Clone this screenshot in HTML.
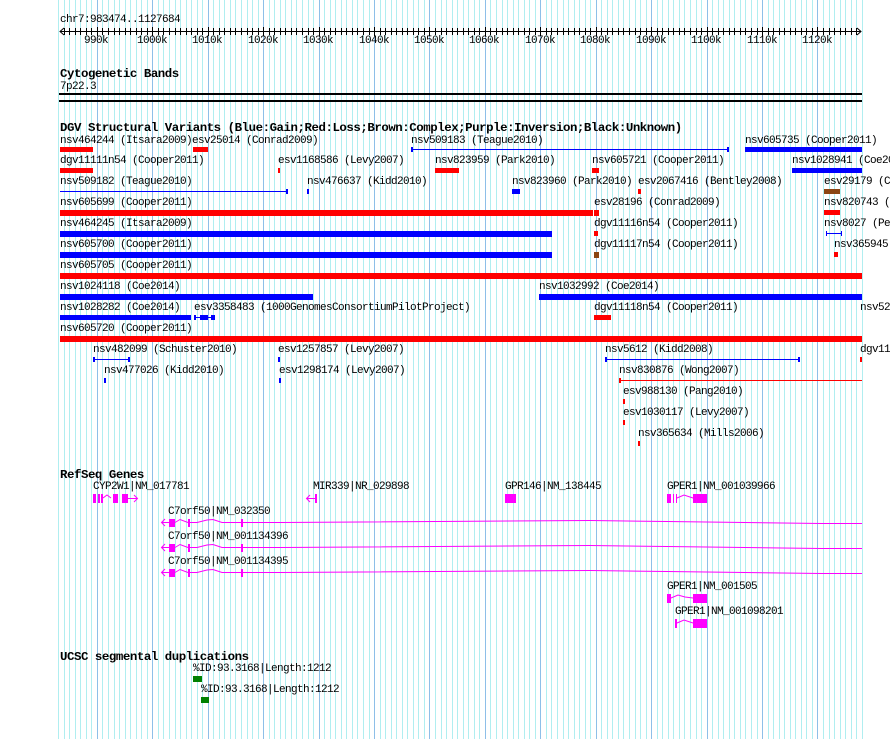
<!DOCTYPE html>
<html><head><meta charset="utf-8"><style>
html,body{margin:0;padding:0;width:890px;height:739px;overflow:hidden;background:#fff}
#wrap{position:relative;width:890px;height:739px;overflow:hidden}
.t{position:absolute;font-family:"Liberation Mono",monospace;font-size:11px;letter-spacing:-0.6px;line-height:10px;white-space:nowrap;color:#000}
.h{position:absolute;font-family:"Liberation Mono",monospace;font-size:12.4px;letter-spacing:-0.45px;font-weight:bold;line-height:12px;white-space:nowrap;color:#000}
svg{position:absolute;left:0;top:0}
</style></head><body><div id="wrap">
<svg id="g" width="890" height="739" shape-rendering="crispEdges"></svg>
<svg width="890" height="739" shape-rendering="crispEdges">
<line x1="60" y1="31.5" x2="861" y2="31.5" stroke="#000"/>
<path d="M64 28 L60 31.5 L64 35 M857 28 L861 31.5 L857 35" stroke="#000" fill="none" shape-rendering="auto"/>
<g id="tk" fill="#000"></g>
<rect x="59" y="93" width="803" height="2" fill="#000"/>
<rect x="59" y="100" width="803" height="2" fill="#000"/>
<g>
<rect x="60" y="147" width="33" height="5" fill="#f00"/>
<rect x="193" y="147" width="15" height="5" fill="#f00"/>
<rect x="411" y="149" width="317" height="1" fill="#00f"/><rect x="411" y="147" width="2" height="5" fill="#00f"/><rect x="727" y="147" width="2" height="5" fill="#00f"/>
<rect x="745" y="147" width="117" height="5" fill="#00f"/>
<rect x="60" y="168" width="33" height="5" fill="#f00"/>
<rect x="278" y="168" width="2" height="5" fill="#f00"/>
<rect x="435" y="168" width="24" height="5" fill="#f00"/>
<rect x="592" y="168" width="7" height="5" fill="#f00"/>
<rect x="792" y="168" width="70" height="5" fill="#00f"/>
<rect x="60" y="191" width="227" height="1" fill="#00f"/><rect x="286" y="189" width="2" height="5" fill="#00f"/>
<rect x="307" y="189" width="2" height="5" fill="#00f"/>
<rect x="512" y="189" width="8" height="5" fill="#00f"/>
<rect x="638" y="189" width="3" height="5" fill="#f00"/>
<rect x="824" y="189" width="16" height="5" fill="#8b4513"/>
<rect x="60" y="210" width="533" height="6" fill="#f00"/>
<rect x="594" y="210" width="5" height="6" fill="#f00"/>
<rect x="824" y="210" width="16" height="5" fill="#f00"/>
<rect x="60" y="231" width="492" height="6" fill="#00f"/>
<rect x="594" y="231" width="4" height="5" fill="#f00"/>
<rect x="826" y="233" width="16" height="1" fill="#00f"/><rect x="826" y="231" width="1" height="5" fill="#00f"/><rect x="841" y="231" width="1" height="5" fill="#00f"/>
<rect x="60" y="252" width="492" height="6" fill="#00f"/>
<rect x="594" y="252" width="5" height="6" fill="#8b4513"/>
<rect x="834" y="252" width="4" height="5" fill="#f00"/>
<rect x="60" y="273" width="802" height="6" fill="#f00"/>
<rect x="60" y="294" width="253" height="6" fill="#00f"/>
<rect x="539" y="294" width="323" height="6" fill="#00f"/>
<rect x="60" y="315" width="131" height="5" fill="#00f"/>
<rect x="194" y="317" width="21" height="1" fill="#00f"/><rect x="194" y="315" width="2" height="5" fill="#00f"/><rect x="200" y="315" width="8" height="5" fill="#00f"/><rect x="211" y="315" width="4" height="5" fill="#00f"/>
<rect x="594" y="315" width="17" height="5" fill="#f00"/>
<rect x="60" y="336" width="802" height="6" fill="#f00"/>
<rect x="93" y="359" width="36" height="1" fill="#00f"/><rect x="93" y="357" width="2" height="5" fill="#00f"/><rect x="128" y="357" width="2" height="5" fill="#00f"/>
<rect x="278" y="357" width="2" height="5" fill="#00f"/>
<rect x="605" y="359" width="194" height="1" fill="#00f"/><rect x="605" y="357" width="2" height="5" fill="#00f"/><rect x="798" y="357" width="2" height="5" fill="#00f"/>
<rect x="860" y="357" width="2" height="5" fill="#f00"/>
<rect x="104" y="378" width="2" height="5" fill="#00f"/>
<rect x="279" y="378" width="2" height="5" fill="#00f"/>
<rect x="619" y="380" width="243" height="1" fill="#f00"/><rect x="619" y="378" width="2" height="5" fill="#f00"/>
<rect x="623" y="399" width="2" height="5" fill="#f00"/>
<rect x="623" y="420" width="2" height="5" fill="#f00"/>
<rect x="638" y="441" width="2" height="5" fill="#f00"/>
</g>
<g fill="#f0f" stroke="none">
<rect x="93" y="494" width="3" height="9"/><rect x="98" y="494" width="2" height="9"/><rect x="101" y="494" width="2" height="9"/>
<rect x="113" y="494" width="5" height="9"/><rect x="122" y="494" width="6" height="9"/>
<rect x="128" y="498" width="9" height="1"/>
<rect x="307" y="498" width="9" height="1"/><rect x="315" y="494" width="2" height="9"/>
<rect x="505" y="494" width="11" height="9"/>
<rect x="667" y="494" width="4" height="9"/><rect x="673" y="494" width="1" height="9"/><rect x="676" y="494" width="1" height="9"/><rect x="693" y="494" width="14" height="9"/>
<rect x="667" y="594" width="4" height="9"/><rect x="693" y="594" width="14" height="9"/>
<rect x="675" y="619" width="2" height="9"/><rect x="693" y="619" width="14" height="9"/>
<rect x="169" y="519" width="6" height="8"/><rect x="188" y="519" width="2" height="8"/><rect x="241" y="519" width="2" height="8"/>
<rect x="169" y="544" width="6" height="8"/><rect x="188" y="544" width="2" height="8"/><rect x="241" y="544" width="2" height="8"/>
<rect x="169" y="569" width="6" height="8"/><rect x="188" y="569" width="2" height="8"/><rect x="241" y="569" width="2" height="8"/>
<rect x="193" y="676" width="9" height="6" fill="#008000"/>
<rect x="201" y="697" width="8" height="6" fill="#008000"/>
</g>
<g stroke="#f0f" fill="none" stroke-width="1" shape-rendering="auto">
<path d="M103 498 L107 495 L111 498"/>
<path d="M134 495 L137.5 498.5 L134 502"/>
<path d="M310 495 L306.5 498.5 L310 502"/>
<path d="M677 498 L684 495 L693 498"/>
<path d="M671 598 L678 595 L685 597 L693 598"/>
<path d="M677 623 L684 620 L693 623"/>
<g id="c7">
<path d="M162 522.5 L169 522.5 M165 519 L161.5 522.5 L165 526 M175 522.5 L180 519.5 L188 522.5 M190 522.5 L197 522.5 L207 520 L213 519.5 L222 522.5 L241 522.5 M243 522.5 L281 522.5 L590 520.5 L667 521.5 L745 522.5 L822 523.5 L862 523.5"/>
</g>
<use href="#c7" y="25"/>
<use href="#c7" y="50"/>
</g>
</svg>
<div class="t" style="left:60px;top:15px">chr7:983474..1127684</div>
<div class="t" style="left:84px;top:36px">990k</div>
<div class="t" style="left:137px;top:36px">1000k</div>
<div class="t" style="left:192px;top:36px">1010k</div>
<div class="t" style="left:248px;top:36px">1020k</div>
<div class="t" style="left:303px;top:36px">1030k</div>
<div class="t" style="left:359px;top:36px">1040k</div>
<div class="t" style="left:414px;top:36px">1050k</div>
<div class="t" style="left:469px;top:36px">1060k</div>
<div class="t" style="left:525px;top:36px">1070k</div>
<div class="t" style="left:580px;top:36px">1080k</div>
<div class="t" style="left:636px;top:36px">1090k</div>
<div class="t" style="left:691px;top:36px">1100k</div>
<div class="t" style="left:747px;top:36px">1110k</div>
<div class="t" style="left:802px;top:36px">1120k</div>
<div class="h" style="left:60px;top:68px">Cytogenetic Bands</div>
<div class="t" style="left:60px;top:82px">7p22.3</div>
<div class="h" style="left:60px;top:122px">DGV Structural Variants (Blue:Gain;Red:Loss;Brown:Complex;Purple:Inversion;Black:Unknown)</div>
<div class="t" style="left:60px;top:136px">nsv464244 (Itsara2009)</div>
<div class="t" style="left:192px;top:136px">esv25014 (Conrad2009)</div>
<div class="t" style="left:411px;top:136px">nsv509183 (Teague2010)</div>
<div class="t" style="left:745px;top:136px">nsv605735 (Cooper2011)</div>
<div class="t" style="left:60px;top:156px">dgv11111n54 (Cooper2011)</div>
<div class="t" style="left:278px;top:156px">esv1168586 (Levy2007)</div>
<div class="t" style="left:435px;top:156px">nsv823959 (Park2010)</div>
<div class="t" style="left:592px;top:156px">nsv605721 (Cooper2011)</div>
<div class="t" style="left:792px;top:156px">nsv1028941 (Coe2014)</div>
<div class="t" style="left:60px;top:177px">nsv509182 (Teague2010)</div>
<div class="t" style="left:307px;top:177px">nsv476637 (Kidd2010)</div>
<div class="t" style="left:512px;top:177px">nsv823960 (Park2010)</div>
<div class="t" style="left:638px;top:177px">esv2067416 (Bentley2008)</div>
<div class="t" style="left:824px;top:177px">esv29179 (Conrad2009)</div>
<div class="t" style="left:60px;top:198px">nsv605699 (Cooper2011)</div>
<div class="t" style="left:594px;top:198px">esv28196 (Conrad2009)</div>
<div class="t" style="left:824px;top:198px">nsv820743 (Coe2014)</div>
<div class="t" style="left:60px;top:219px">nsv464245 (Itsara2009)</div>
<div class="t" style="left:594px;top:219px">dgv11116n54 (Cooper2011)</div>
<div class="t" style="left:824px;top:219px">nsv8027 (Perry2008)</div>
<div class="t" style="left:60px;top:240px">nsv605700 (Cooper2011)</div>
<div class="t" style="left:594px;top:240px">dgv11117n54 (Cooper2011)</div>
<div class="t" style="left:834px;top:240px">nsv365945 (Mills2006)</div>
<div class="t" style="left:60px;top:261px">nsv605705 (Cooper2011)</div>
<div class="t" style="left:60px;top:282px">nsv1024118 (Coe2014)</div>
<div class="t" style="left:539px;top:282px">nsv1032992 (Coe2014)</div>
<div class="t" style="left:60px;top:303px">nsv1028282 (Coe2014)</div>
<div class="t" style="left:194px;top:303px">esv3358483 (1000GenomesConsortiumPilotProject)</div>
<div class="t" style="left:594px;top:303px">dgv11118n54 (Cooper2011)</div>
<div class="t" style="left:860px;top:303px">nsv528</div>
<div class="t" style="left:60px;top:324px">nsv605720 (Cooper2011)</div>
<div class="t" style="left:93px;top:345px">nsv482099 (Schuster2010)</div>
<div class="t" style="left:278px;top:345px">esv1257857 (Levy2007)</div>
<div class="t" style="left:605px;top:345px">nsv5612 (Kidd2008)</div>
<div class="t" style="left:860px;top:345px">dgv11</div>
<div class="t" style="left:104px;top:366px">nsv477026 (Kidd2010)</div>
<div class="t" style="left:279px;top:366px">esv1298174 (Levy2007)</div>
<div class="t" style="left:619px;top:366px">nsv830876 (Wong2007)</div>
<div class="t" style="left:623px;top:387px">esv988130 (Pang2010)</div>
<div class="t" style="left:623px;top:408px">esv1030117 (Levy2007)</div>
<div class="t" style="left:638px;top:429px">nsv365634 (Mills2006)</div>
<div class="h" style="left:60px;top:469px">RefSeq Genes</div>
<div class="t" style="left:93px;top:482px">CYP2W1|NM_017781</div>
<div class="t" style="left:313px;top:482px">MIR339|NR_029898</div>
<div class="t" style="left:505px;top:482px">GPR146|NM_138445</div>
<div class="t" style="left:667px;top:482px">GPER1|NM_001039966</div>
<div class="t" style="left:168px;top:507px">C7orf50|NM_032350</div>
<div class="t" style="left:168px;top:532px">C7orf50|NM_001134396</div>
<div class="t" style="left:168px;top:557px">C7orf50|NM_001134395</div>
<div class="t" style="left:667px;top:582px">GPER1|NM_001505</div>
<div class="t" style="left:675px;top:607px">GPER1|NM_001098201</div>
<div class="h" style="left:60px;top:651px">UCSC segmental duplications</div>
<div class="t" style="left:193px;top:664px">%ID:93.3168|Length:1212</div>
<div class="t" style="left:201px;top:685px">%ID:93.3168|Length:1212</div>
</div>
<script>
(function(){
var ns="http://www.w3.org/2000/svg",g=document.getElementById("g"),tk=document.getElementById("tk");
for(var i=0;i<=145;i++){
 var x=Math.round(58.1+i*5.543);
 var dark=((i-7)%10===0);
 var r=document.createElementNS(ns,"rect");
 r.setAttribute("x",x);r.setAttribute("y",0);r.setAttribute("width",1);r.setAttribute("height",739);
 r.setAttribute("fill",dark?"#8ebfe8":"#b0eef0");g.appendChild(r);
 if(x>=61&&x<=858){var t=document.createElementNS(ns,"rect");
 t.setAttribute("x",x);t.setAttribute("y",dark?27:28);t.setAttribute("width",1);t.setAttribute("height",dark?9:7);tk.appendChild(t);}
}
})();
</script>
</body></html>
